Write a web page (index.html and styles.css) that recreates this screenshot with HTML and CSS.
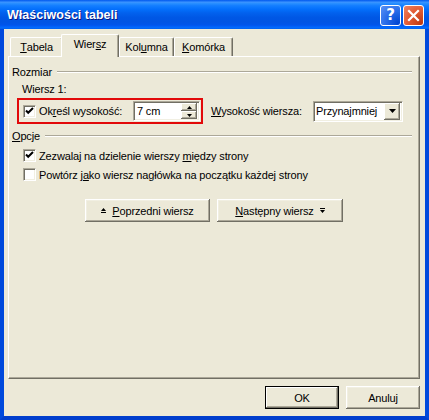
FILE: index.html
```html
<!DOCTYPE html>
<html lang="pl">
<head>
<meta charset="utf-8">
<title>Właściwości tabeli</title>
<link rel="stylesheet" href="styles.css">
</head>
<body>
<div class="window">
  <div class="titlebar">
    <span class="title">Właściwości tabeli</span>
    <div class="caption-buttons">
      <span class="cbtn help">?</span>
      <span class="cbtn close"><svg width="13" height="13" viewBox="0 0 13 13"><path d="M2 2 L11 11 M11 2 L2 11" stroke="#fff" stroke-width="2.2" fill="none" stroke-linecap="square"/></svg></span>
    </div>
  </div>
  <div class="frame">
    <div class="client">
      <div class="tabs">
        <div class="tab t1"><u>T</u>abela</div>
        <div class="tab t2 selected">Wier<u>s</u>z</div>
        <div class="tab t3">Kol<u>u</u>mna</div>
        <div class="tab t4"><u>K</u>omórka</div>
      </div>
      <div class="panel">
        <div class="group-head"><span>Rozmiar</span><span class="etch"></span></div>
        <div class="sub">Wiersz 1:</div>
        <div class="size-row">
          <div class="highlight">
            <span class="check on"><svg width="9" height="9" viewBox="0 0 9 9"><path d="M1 3.5 L3.2 5.8 L8 1" stroke="#000" stroke-width="2" fill="none"/></svg></span>
            <span class="lbl-height1">Ok<u>r</u>eśl wysokość:</span>
            <div class="spinner">
              <span class="spin-text">7 cm</span>
              <div class="spin-btns">
                <span class="spin-btn"><svg width="5" height="3" viewBox="0 0 5 3"><path d="M2.5 0 L5 3 L0 3 Z" fill="#000"/></svg></span>
                <span class="spin-btn"><svg width="5" height="3" viewBox="0 0 5 3"><path d="M0 0 L5 0 L2.5 3 Z" fill="#000"/></svg></span>
              </div>
            </div>
          </div>
          <span class="lbl-height2"><u>W</u>ysokość wiersza:</span>
          <div class="select">
            <span class="select-text">Przynajmniej</span>
            <span class="drop-btn"><svg width="7" height="4" viewBox="0 0 7 4"><path d="M0 0 L7 0 L3.5 4 Z" fill="#000"/></svg></span>
          </div>
        </div>
        <div class="group-head opcje"><span><u>O</u>pcje</span><span class="etch"></span></div>
        <div class="check-row first">
          <span class="check on"><svg width="9" height="9" viewBox="0 0 9 9"><path d="M1 3.5 L3.2 5.8 L8 1" stroke="#000" stroke-width="2" fill="none"/></svg></span>
          <span>Zezwalaj na dzielenie wierszy <u>m</u>iędzy strony</span>
        </div>
        <div class="check-row">
          <span class="check"></span>
          <span>Powtórz j<u>a</u>ko wiersz nagłówka na początku każdej strony</span>
        </div>
        <div class="nav-row">
          <span class="btn nav prev"><svg width="5" height="6" viewBox="0 0 5 6"><path d="M2.5 0 L5 3 L0 3 Z M0 4 H5 V5 H0 Z" fill="#000"/></svg><span><u>P</u>oprzedni wiersz</span></span>
          <span class="btn nav next"><span><u>N</u>astępny wiersz</span><svg width="5" height="6" viewBox="0 0 5 6"><path d="M0 0 H5 V1 H0 Z M0 2 L5 2 L2.5 5 Z" fill="#000"/></svg></span>
        </div>
      </div>
      <div class="footer">
        <span class="btn default">OK</span>
        <span class="btn">Anuluj</span>
      </div>
    </div>
  </div>
</div>
</body>
</html>
```
FILE: styles.css
```css
* { box-sizing: border-box; }
html, body { margin: 0; padding: 0; }
body {
  width: 429px;
  height: 420px;
  overflow: hidden;
  background: #ECE9D8;
  font-family: "Liberation Sans", Arial, sans-serif;
  font-size: 11px;
  letter-spacing: -0.15px;
  color: #000;
}
u { text-decoration: underline; text-underline-offset: 1px; }

.window {
  width: 429px;
  height: 420px;
  display: flex;
  flex-direction: column;
  background: #0054E3;
}

.titlebar {
  flex: none;
  height: 29px;
  display: flex;
  align-items: center;
  padding: 0 5px 0 7px;
  background: linear-gradient(to bottom, #0058EE 0%, #3A93FF 8%, #288EFF 12%, #127DFF 20%, #036FFC 32%, #0262EE 44%, #0057E5 60%, #0054E3 76%, #0055EB 86%, #005BF5 90%, #026AFE 94%, #0062EF 100%);
}
.title {
  flex: 1;
  color: #fff;
  font-weight: bold;
  font-size: 12.5px;
  letter-spacing: 0;
  text-shadow: 1px 1px #0A1883;
}
.caption-buttons {
  display: flex;
  gap: 2px;
  margin-top: 1px;
}
.cbtn {
  width: 21px;
  height: 21px;
  border: 1px solid #fff;
  border-radius: 3px;
  display: flex;
  align-items: center;
  justify-content: center;
  color: #fff;
}
.help {
  background: radial-gradient(circle at 90% 90%, #0046D2 0%, #2C6FEA 55%, #5A93F5 100%);
  font-weight: bold;
  font-size: 15px;
  letter-spacing: 0;
  font-family: "DejaVu Sans", sans-serif;
}
.close {
  background: radial-gradient(circle at 90% 90%, #C13A12 0%, #E25B34 55%, #EE8566 100%);
}

.frame {
  flex: 1;
  display: flex;
  flex-direction: column;
  border-left: 4px solid #0049DC;
  border-right: 4px solid #0049DC;
  border-bottom: 4px solid #003ECD;
  box-shadow: inset 1px 0 #0831D9;
}
.client {
  flex: 1;
  display: flex;
  flex-direction: column;
  background: #ECE9D8;
  padding: 5px 5px 0 4px;
}

.tabs {
  flex: none;
  height: 22px;
  display: flex;
  align-items: flex-end;
  padding-left: 2px;
}
.tab {
  height: 19px;
  display: flex;
  align-items: center;
  justify-content: center;
  padding-bottom: 1px;
  background: #ECE9D8;
  border-top: 1px solid #fff;
  border-left: 1px solid #fff;
  border-right: 1px solid #716F64;
  box-shadow: inset -1px 0 #ACA899;
  border-radius: 2px 2px 0 0;
}
.t1 { width: 53px; }
.t2 { width: 58px; }
.t3 { width: 55px; }
.t4 { width: 59px; }
.tab.selected {
  height: 23px;
  margin: 0 0 -1px -2px;
  padding-bottom: 4px;
  position: relative;
  z-index: 1;
}

.panel {
  flex: none;
  height: 323px;
  display: flex;
  flex-direction: column;
  border-top: 1px solid #fff;
  border-left: 1px solid #fff;
  border-right: 1px solid #716F64;
  border-bottom: 1px solid #716F64;
  box-shadow: inset -1px -1px #ACA899;
}

.group-head {
  height: 14px;
  margin: 8px 0 0 3px;
  display: flex;
  align-items: center;
}
.group-head.opcje { margin-top: 5px; }
.etch {
  flex: 1;
  height: 2px;
  margin: 0 7px 0 5px;
  border-top: 1px solid #ACA899;
  border-bottom: 1px solid #fff;
}
.sub {
  height: 14px;
  line-height: 14px;
  margin: 3px 0 0 13px;
}

.size-row {
  height: 26px;
  margin: 2px 0 0 8px;
  display: flex;
  align-items: center;
}
.highlight {
  width: 186px;
  height: 26px;
  border: 2px solid #E20A0A;
  display: flex;
  align-items: center;
  padding-left: 4px;
}
.check {
  flex: none;
  width: 13px;
  height: 13px;
  background: #fff;
  border-top: 1px solid #ACA899;
  border-left: 1px solid #ACA899;
  border-right: 1px solid #fff;
  border-bottom: 1px solid #fff;
  box-shadow: inset 1px 1px #716F64, inset -1px -1px #F1EFE2;
  display: flex;
  align-items: center;
  justify-content: center;
  margin-right: 3px;
}
.lbl-height1 { width: 94px; }
.spinner, .select {
  height: 20px;
  background: #fff;
  border-top: 1px solid #ACA899;
  border-left: 1px solid #ACA899;
  border-right: 1px solid #fff;
  border-bottom: 1px solid #fff;
  box-shadow: inset 1px 1px #716F64, inset -1px -1px #F1EFE2;
  display: flex;
  align-items: center;
  padding: 2px 2px 2px 3px;
}
.spinner { width: 67px; }
.spin-text, .select-text { flex: 1; }
.spin-btns {
  width: 16px;
  height: 16px;
  display: flex;
  flex-direction: column;
}
.spin-btn {
  flex: 1;
  display: flex;
  align-items: center;
  justify-content: center;
  background: #ECE9D8;
  box-shadow: inset -1px -1px #716F64, inset 1px 1px #fff, inset -2px -2px #ACA899;
}
.lbl-height2 {
  width: 102px;
  margin-left: 8px;
}
.select {
  width: 90px;
  height: 21px;
  padding-left: 2px;
}
.drop-btn {
  width: 16px;
  height: 17px;
  display: flex;
  align-items: center;
  justify-content: center;
  background: #ECE9D8;
  box-shadow: inset -1px -1px #716F64, inset 1px 1px #fff, inset -2px -2px #ACA899;
}

.check-row {
  height: 19px;
  margin: 0 0 0 14px;
  display: flex;
  align-items: center;
}
.check-row.first { margin-top: 3px; }

.btn {
  display: flex;
  align-items: center;
  justify-content: center;
  height: 23px;
  background: #ECE9D8;
  box-shadow: inset -1px -1px #716F64, inset 1px 1px #fff, inset -2px -2px #ACA899, inset 2px 2px #F1EFE2;
}
.nav-row {
  margin: 15px 0 0 76px;
  display: flex;
  gap: 7px;
}
.nav { gap: 6px; }
.prev { width: 125px; }
.next { width: 126px; }

.footer {
  display: flex;
  justify-content: flex-end;
  gap: 7px;
  margin-top: 7px;
}
.footer .btn { width: 74px; }
.btn.default {
  border: 1px solid #000;
  box-shadow: inset -1px -1px #716F64, inset 1px 1px #fff, inset -2px -2px #ACA899;
}
```
